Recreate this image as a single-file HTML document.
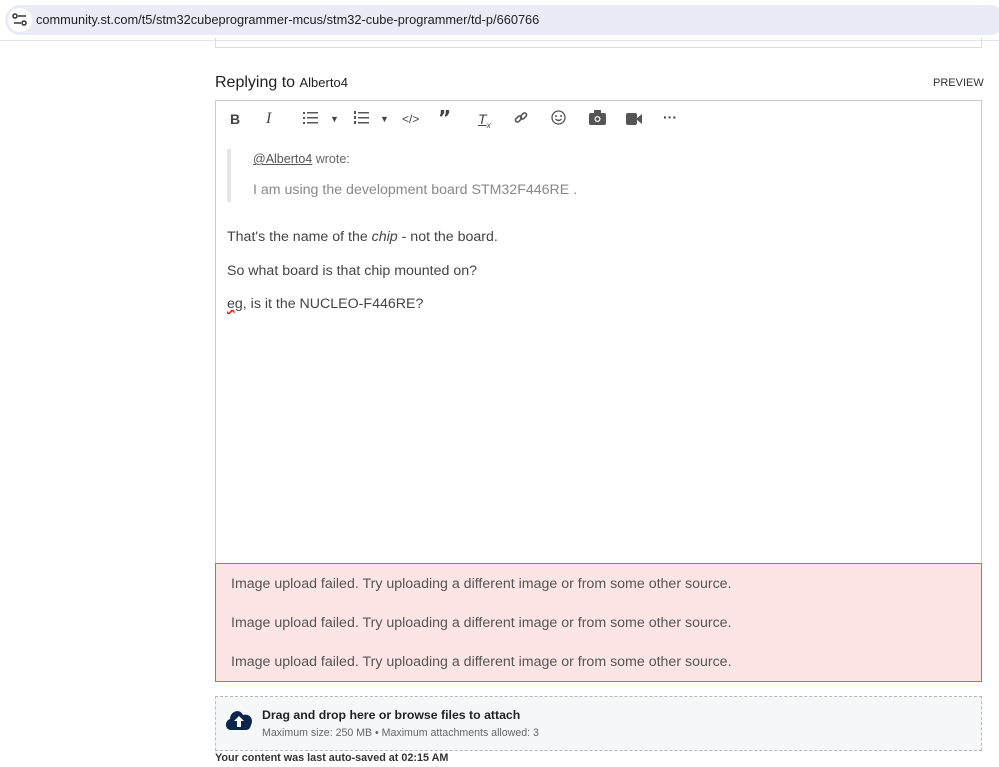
<!DOCTYPE html>
<html><head><meta charset="utf-8"><style>
body{margin:0;width:999px;height:767px;background:#fff;font-family:"Liberation Sans",sans-serif;position:relative;overflow:hidden}
.abs{position:absolute}
.tb span{position:absolute;top:111px;color:#444;font-size:14px}
</style></head><body>
<div class="abs" style="left:0;top:0;width:999px;height:40px;background:#fff;border-bottom:1px solid #e3e3e3"></div>
<div class="abs" style="left:5px;top:5px;width:1000px;height:30px;background:#e9ecf4;border-radius:15px"></div>
<div class="abs" style="left:8px;top:8px;width:24px;height:24px;border-radius:12px;background:#fff"></div>
<svg class="abs" style="left:12px;top:13px" width="16" height="14"><circle cx="3" cy="3" r="2" fill="none" stroke="#333" stroke-width="1.5"/><line x1="6" y1="3" x2="14" y2="3" stroke="#333" stroke-width="1.5"/><line x1="2" y1="10" x2="9" y2="10" stroke="#333" stroke-width="1.5"/><circle cx="12" cy="10" r="2" fill="none" stroke="#333" stroke-width="1.5"/></svg>
<div class="abs" style="left:36px;top:12px;font-size:12.8px;color:#202124">community.st.com/t5/stm32cubeprogrammer-mcus/stm32-cube-programmer/td-p/660766</div>
<div class="abs" style="left:215px;top:38px;width:765px;height:9px;border:1px solid #ddd;border-top:none"></div>
<div class="abs" style="left:215px;top:74px;font-size:16px;color:#222">Replying to <span style="font-size:13px">Alberto4</span></div>
<div class="abs" style="left:933px;top:77px;font-size:11px;color:#333">PREVIEW</div>
<div class="abs" style="left:215px;top:100px;width:765px;height:462px;border:1px solid #ccc"></div>
<div class="tb">
<span style="left:230px;font-weight:bold">B</span>
<span style="left:266px;font-style:italic;font-family:'Liberation Serif',serif;font-size:16px;top:110px">I</span>
<span style="left:303px;top:111px"><svg width="15" height="13"><g fill="#555"><rect x="0" y="1" width="2" height="2"/><rect x="0" y="6" width="2" height="2"/><rect x="0" y="11" width="2" height="2"/><rect x="4" y="1" width="11" height="1.5"/><rect x="4" y="6" width="11" height="1.5"/><rect x="4" y="11" width="11" height="1.5"/></g></svg></span><span style="left:330px;font-size:9px;top:114px">▼</span>
<span style="left:354px;top:111px"><svg width="15" height="13"><g fill="#555"><rect x="0" y="0" width="2" height="3"/><rect x="0" y="5" width="2" height="3"/><rect x="0" y="10" width="2" height="3"/><rect x="4" y="1" width="11" height="1.5"/><rect x="4" y="6" width="11" height="1.5"/><rect x="4" y="11" width="11" height="1.5"/></g></svg></span><span style="left:380px;font-size:9px;top:114px">▼</span>
<span style="left:402px;font-size:12px;top:112px">&lt;/&gt;</span>
<span style="left:438px;font-weight:bold;font-size:20px;top:106px;font-family:'DejaVu Sans'">”</span>
<span style="left:478px;font-style:italic;text-decoration:underline">T<sub style="font-size:8px">x</sub></span>
<span style="left:514px;top:111px"><svg width="14" height="14"><g fill="none" stroke="#555" stroke-width="1.6"><rect x="1" y="6" width="7" height="4" rx="2" transform="rotate(-45 4.5 8)"/><rect x="6" y="3" width="7" height="4" rx="2" transform="rotate(-45 9.5 5)"/></g></svg></span>
<span style="left:551px;top:110px"><svg width="15" height="15"><circle cx="7.5" cy="7.5" r="6.5" fill="none" stroke="#555" stroke-width="1.3"/><circle cx="5" cy="6" r="1" fill="#555"/><circle cx="10" cy="6" r="1" fill="#555"/><path d="M4.5 9 Q7.5 12 10.5 9" fill="none" stroke="#555" stroke-width="1.3"/></svg></span>
<span style="left:589px;top:110px"><svg width="17" height="15"><rect x="0" y="3" width="17" height="12" rx="2" fill="#555"/><rect x="5" y="0" width="7" height="4" fill="#555"/><circle cx="8.5" cy="9" r="3" fill="#fff"/><circle cx="8.5" cy="9" r="1.8" fill="#555"/></svg></span>
<span style="left:626px;top:112px"><svg width="16" height="12"><rect x="0" y="0" width="11" height="12" rx="2" fill="#555"/><path d="M10 6 L16 1 L16 11Z" fill="#555"/></svg></span>
<span style="left:663px;font-weight:bold;top:109px">···</span>
</div>
<div class="abs" style="left:227px;top:149px;width:4px;height:53px;background:#e6e6e6"></div>
<div class="abs" style="left:253px;top:152px;font-size:12.5px;color:#666"><u style="color:#555">@Alberto4</u> wrote:</div>
<div class="abs" style="left:253px;top:182px;font-size:14.2px;color:#888">I am using the development board STM32F446RE .</div>
<div class="abs" style="left:227px;top:229px;font-size:14.2px;color:#444">That's the name of the <i>chip</i> - not the board.</div>
<div class="abs" style="left:227px;top:263px;font-size:14.2px;color:#444">So what board is that chip mounted on?</div>
<div class="abs" style="left:227px;top:296px;font-size:14.2px;color:#444"><span style="text-decoration:underline wavy red">eg</span>, is it the NUCLEO-F446RE?</div>
<div class="abs" style="left:215px;top:563px;width:765px;height:117px;background:#fde5e5;border:1px solid #d5625c"></div>
<div class="abs" style="left:231px;top:565px;font-size:14.2px;color:#555;line-height:39px">Image upload failed. Try uploading a different image or from some other source.<br>Image upload failed. Try uploading a different image or from some other source.<br>Image upload failed. Try uploading a different image or from some other source.</div>
<div class="abs" style="left:215px;top:696px;width:765px;height:53px;background:#f6f7f9;border:1px dashed #bbb"></div>
<svg class="abs" style="left:224px;top:706px" width="30" height="25"><path d="M7 24 C1 24 0 15 6 13 C6 5 16 2 19 9 C26 7 30 14 27 19 C26 23 24 24 22 24Z" fill="#0b2648"/><path d="M15 10 L20 15 L17 15 L17 21 L13 21 L13 15 L10 15Z" fill="#fff"/></svg>
<div class="abs" style="left:262px;top:708px;font-size:12.3px;font-weight:bold;color:#222">Drag and drop here or browse files to attach</div>
<div class="abs" style="left:262px;top:727px;font-size:10.6px;color:#666">Maximum size: 250 MB • Maximum attachments allowed: 3</div>
<div class="abs" style="left:215px;top:752px;font-size:10.8px;font-weight:bold;color:#333">Your content was last auto-saved at 02:15 AM</div>
</body></html>
